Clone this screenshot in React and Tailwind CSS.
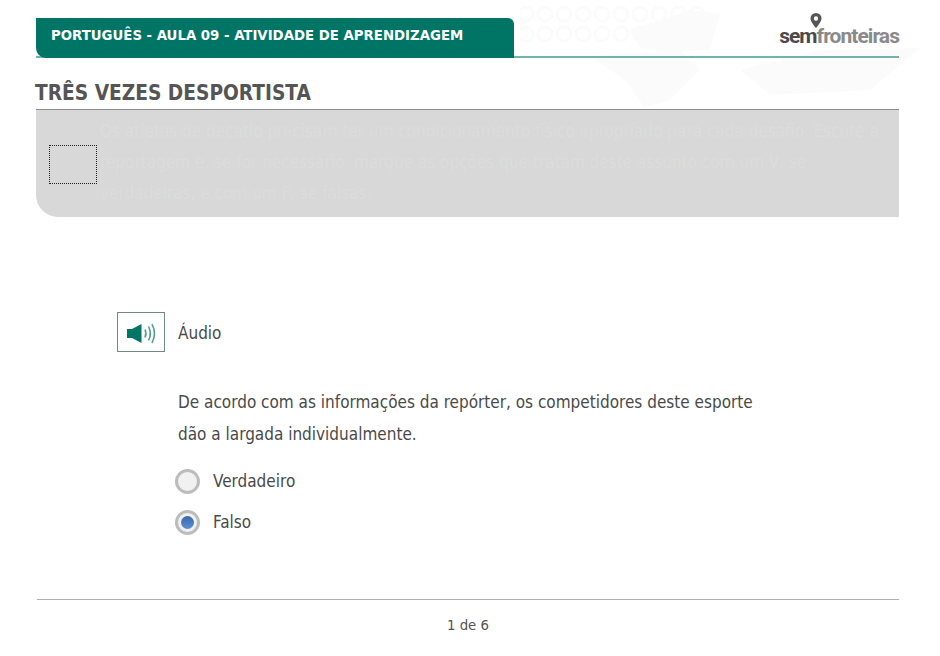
import { useState } from 'react';

// Map and pin pattern behind the header, very faint in the reference
const WorldMap = () => (
  <svg className="absolute left-[520px] top-0 pointer-events-none" width="420" height="130" viewBox="0 0 420 130">
    <g fill="none" stroke="#fbfbfb" strokeWidth="3">
      {[0, 1, 2, 3, 4, 5, 6, 7, 8, 9].map((i) => (
        <circle key={i} cx={6 + i * 19} cy="14" r="7" />
      ))}
      {[0, 1, 2, 3, 4, 5, 6, 7, 8].map((i) => (
        <circle key={i} cx={6 + i * 19} cy="34" r="7" />
      ))}
    </g>
    <g fill="#fbfbfb">
      <path d="M110 30 L170 10 L200 14 L190 50 L150 52 L120 48Z" />
      <path d="M70 56 L160 50 L180 70 L150 100 L125 108 L105 80Z" />
      <path d="M220 70 L300 50 L400 48 L350 90 L250 95Z" />
    </g>
  </svg>
);

const Logo = () => (
  <div className="relative font-['Roboto',sans-serif] text-[21px] leading-[18px] font-bold tracking-[-0.95px] w-[120px] text-right">
    <svg width="12" height="16" viewBox="0 0 12 16" className="absolute left-[31px] -top-[14px]">
      <path fillRule="evenodd" fill="#555" d="M6 0a5.500 5.500 0 0 1 5.500 5.500C11.500 9 6 15 6 15S.5 9 .5 5.500A5.500 5.500 0 0 1 6 0Zm0 3.300a2.200 2.200 0 1 0 0 4.400 2.200 2.200 0 0 0 0-4.400Z" />
    </svg>
    <span className="text-[#4a4a4a]">sem</span>
    <span className="text-[#8a8a8a]">fronteiras</span>
  </div>
);

const Radio = ({ label, checked, onSelect }) => (
  <button type="button" onClick={onSelect} className="flex items-center gap-[13px] cursor-pointer">
    <span className="w-[25px] h-[25px] rounded-full border-[3px] border-[#bcbcbc] bg-[#f1f1f1] flex items-center justify-center">
      {checked && <span className="w-[13px] h-[13px] rounded-full bg-gradient-to-b from-[#3a68ad] to-[#5c8fd0]" />}
    </span>
    <span className="text-[17px] leading-[25px] text-[#4a4a4a]">{label}</span>
  </button>
);

export default function App() {
  const [answer, setAnswer] = useState('falso');

  return (
    <div className="relative w-[940px] h-[656px] bg-white overflow-hidden font-['DejaVu_Sans_Condensed','DejaVu_Sans',sans-serif] text-[#4a4a4a]">
      <WorldMap />

      <div className="relative pl-[36px] pr-[41px] pt-[18px]">
        {/* Header */}
        <div className="flex items-end justify-between border-b-2 border-[#72b5a8] h-[40px]">
          <div className="w-[478px] h-[40px] -mb-[2px] bg-[#007565] rounded-tr-[6px] rounded-bl-[10px] pl-[15px] pt-[7px] text-white text-[14.800px] leading-[20px] font-bold">
            PORTUGUÊS - AULA 09 - ATIVIDADE DE APRENDIZAGEM
          </div>
          <div className="pb-[11px]">
            <Logo />
          </div>
        </div>

        {/* Title */}
        <h1 className="mt-[20px] -ml-[1px] text-[20.700px] leading-[30px] font-bold text-[#555]">TRÊS VEZES DESPORTISTA</h1>

        {/* Instruction panel, text is nearly invisible in the reference */}
        <div className="mt-[1px] h-[108px] border-t border-[#8f8f8f] bg-[#d8d8d8] rounded-bl-[22px] flex items-start pl-[13px]">
          <div className="mt-[35px] w-[48px] h-[39px] shrink-0 border border-dotted border-[#222]" />
          <p className="ml-[3px] mt-[6px] w-[790px] text-[17px] leading-[31px] text-[#dcdcdc] whitespace-nowrap">
            Os atletas de decatlo precisam ter um condicionamento físico apropriado para cada desafio. Escute a<br />
            reportagem e, se for necessário, marque as opções que tratam deste assunto com um V, se<br />
            verdadeiras, e com um F, se falsas.
          </p>
        </div>

        {/* Question */}
        <div className="mt-[95px] ml-[81px]">
          <div className="flex items-center gap-[13px]">
            <div className="w-[48px] h-[40px] border border-[#6f8a85] flex items-center justify-center">
              <svg width="30" height="24" viewBox="0 0 30 24">
                <path fill="#007565" d="M1 9h5L15.500 4v19L6 18H1z" />
                <g fill="none" stroke="#4f9d90" strokeWidth="1.600">
                  <path d="M19 9.500c1.200 2.600 1.200 5.400 0 8" />
                  <path d="M22.500 6.500c2.200 4.200 2.200 9.800 0 14" />
                  <path d="M26 4c3 5.800 3 13.200 0 19" />
                </g>
              </svg>
            </div>
            <span className="pt-[1px] text-[17px] leading-[24px] text-[#4a4a4a]">Áudio</span>
          </div>

          <p className="mt-[34px] ml-[61px] text-[17px] leading-[32px] text-[#4a4a4a] whitespace-nowrap">
            De acordo com as informações da repórter, os competidores deste esporte<br />
            dão a largada individualmente.
          </p>

          <div className="mt-[19px] ml-[58px] flex flex-col items-start gap-[16px]">
            <Radio label="Verdadeiro" checked={answer === 'verdadeiro'} onSelect={() => setAnswer('verdadeiro')} />
            <Radio label="Falso" checked={answer === 'falso'} onSelect={() => setAnswer('falso')} />
          </div>
        </div>

        {/* Footer */}
        <div className="mt-[64px] ml-[1px] border-t border-[#b0b0b0] pt-[15px] text-center text-[14.800px] leading-[20px] text-[#555]">
          1 de 6
        </div>
      </div>
    </div>
  );
}
